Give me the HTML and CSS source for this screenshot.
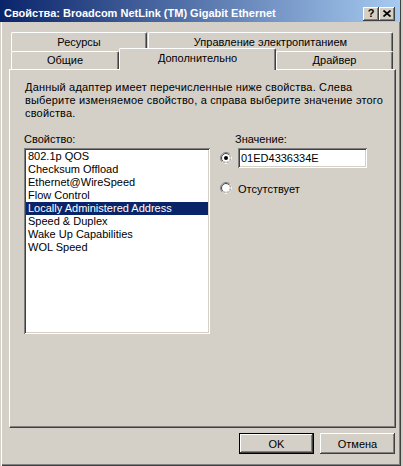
FILE: index.html
```html
<!DOCTYPE html>
<html lang="ru">
<head>
  <meta charset="UTF-8">
  <title>Свойства: Broadcom NetLink (TM) Gigabit Ethernet</title>
  <link rel="stylesheet" href="styles.css">
</head>
<body>
  <div class="window">
    <!-- Title bar -->
    <div class="titlebar">
      <span class="title">Свойства: Broadcom NetLink (TM) Gigabit Ethernet</span>
      <div class="caption-buttons">
        <button class="cap-btn">?</button>
        <button class="cap-btn">
          <svg width="8" height="7" viewBox="0 0 8 7"><path d="M0.5 0.5L7.5 6.5M7.5 0.5L0.5 6.5" stroke="#000" stroke-width="1.7" fill="none"/></svg>
        </button>
      </div>
    </div>

    <!-- Tabs -->
    <div class="tabs">
      <div class="tab-row back">
        <div class="tab tab-res">Ресурсы</div>
        <div class="tab tab-power">Управление электропитанием</div>
      </div>
      <div class="tab-row front">
        <div class="tab tab-general">Общие</div>
        <div class="tab tab-advanced active">Дополнительно</div>
        <div class="tab tab-driver">Драйвер</div>
      </div>
    </div>

    <!-- Tab page -->
    <div class="panel">
      <p class="intro">Данный адаптер имеет перечисленные ниже свойства. Слева<br>выберите изменяемое свойство, а справа выберите значение этого<br>свойства.</p>

      <div class="props">
        <div class="prop-col">
          <div class="label">Свойство:</div>
          <ul class="listbox">
            <li>802.1p QOS</li>
            <li>Checksum Offload</li>
            <li>Ethernet@WireSpeed</li>
            <li>Flow Control</li>
            <li class="selected">Locally Administered Address</li>
            <li>Speed &amp; Duplex</li>
            <li>Wake Up Capabilities</li>
            <li>WOL Speed</li>
          </ul>
        </div>

        <div class="value-col">
          <div class="label value-label">Значение:</div>
          <div class="option">
            <svg class="radio" width="12" height="12" viewBox="0 0 12 12">
              <circle cx="6" cy="6" r="5.5" fill="#fff" stroke="#808080"/>
              <path d="M9.89 2.11A5.5 5.5 0 0 1 2.11 9.89" stroke="#fff" fill="none"/>
              <circle cx="6" cy="6" r="4.5" fill="#fff" stroke="#404040"/>
              <path d="M9.18 2.82A4.5 4.5 0 0 1 2.82 9.18" stroke="#d4d0c8" fill="none"/>
              <circle cx="6" cy="6" r="2" fill="#000"/>
            </svg>
            <div class="field">01ED4336334E</div>
          </div>
          <div class="option second">
            <svg class="radio" width="12" height="12" viewBox="0 0 12 12">
              <circle cx="6" cy="6" r="5.5" fill="#fff" stroke="#808080"/>
              <path d="M9.89 2.11A5.5 5.5 0 0 1 2.11 9.89" stroke="#fff" fill="none"/>
              <circle cx="6" cy="6" r="4.5" fill="#fff" stroke="#404040"/>
              <path d="M9.18 2.82A4.5 4.5 0 0 1 2.82 9.18" stroke="#d4d0c8" fill="none"/>
            </svg>
            <span class="option-text">Отсутствует</span>
          </div>
        </div>
      </div>
    </div>

    <!-- Dialog buttons -->
    <div class="buttons">
      <button class="btn default">OK</button>
      <button class="btn">Отмена</button>
    </div>
  </div>
</body>
</html>
```

FILE: styles.css
```css
body {
  margin: 0;
  background: #d4d0c8;
}
.window {
  width: 401px;
  height: 466px;
  box-sizing: border-box;
  background: #d4d0c8;
  box-shadow: inset 1px 0 #d4d0c8, inset 2px 0 #fff, inset -1px -1px #404040, inset -2px -2px #808080;
  font-family: "Liberation Sans", Arial, sans-serif;
  font-size: 11px;
  color: #000;
  overflow: hidden;
}
.titlebar {
  height: 22px;
  margin-right: 1px;
  display: flex;
  align-items: center;
  padding: 0 5px 0 4px;
  background: linear-gradient(to right, #0a246a, #a6caf0);
}
.title {
  flex: 1;
  color: #fff;
  font-weight: bold;
  padding-top: 3px;
  white-space: nowrap;
}
.caption-buttons {
  display: flex;
  margin-top: 5px;
}
.cap-btn {
  width: 16px;
  height: 14px;
  padding: 0;
  border: none;
  background: #d4d0c8;
  box-shadow: inset -1px -1px #404040, inset 1px 1px #fff, inset -2px -2px #808080;
  font-family: "Liberation Sans", Arial, sans-serif;
  font-size: 11px;
  font-weight: bold;
  line-height: 13px;
  display: flex;
  align-items: center;
  justify-content: center;
}

/* tabs */
.tabs {
  margin: 10px 0 0 11px;
}
.tab-row {
  display: flex;
  align-items: flex-end;
}
.tab-row.back {
  height: 19px;
}
.tab-row.front {
  height: 18px;
}
.tab {
  box-sizing: border-box;
  height: 100%;
  border-top: 1px solid #fff;
  border-left: 1px solid #fff;
  border-right: 1px solid #404040;
  box-shadow: inset -1px 0 #808080;
  border-radius: 2px 2px 0 0;
  text-align: center;
  white-space: nowrap;
  background: #d4d0c8;
}
.back .tab {
  line-height: 18px;
}
.front .tab {
  line-height: 17px;
}
.tab-res {
  width: 136px;
}
.tab-power {
  width: 245px;
  margin-left: 1px;
}
.tab-general {
  width: 108px;
}
.tab-advanced {
  width: 157px;
}
.tab-driver {
  width: 117px;
}
.tab.active {
  height: 22px;
  margin-top: -3px;
  margin-bottom: -1px;
  padding-top: 1px;
  position: relative;
  z-index: 1;
}

/* tab page */
.panel {
  margin-left: 9px;
  width: 387px;
  height: 359px;
  box-sizing: border-box;
  border-top: 1px solid #fff;
  border-left: 1px solid #fff;
  border-right: 1px solid #404040;
  border-bottom: 1px solid #404040;
  box-shadow: inset -1px -1px #808080;
  padding: 11px 0 0 15px;
}
.intro {
  margin: 0;
  line-height: 13px;
  letter-spacing: 0.18px;
  white-space: nowrap;
}
.props {
  display: flex;
  margin-top: 13px;
}
.label {
  line-height: 13px;
  height: 13px;
  margin-bottom: 2px;
}
.prop-col {
  margin-left: -1px;
}
.listbox {
  list-style: none;
  margin: 0;
  padding: 2px;
  width: 186px;
  height: 186px;
  box-sizing: border-box;
  background: #fff;
  box-shadow: inset 1px 1px #808080, inset -1px -1px #fff, inset 2px 2px #404040, inset -2px -2px #d4d0c8;
}
.listbox li {
  line-height: 13px;
  padding-left: 2px;
  white-space: nowrap;
}
.listbox li.selected {
  background: #0a246a;
  color: #fff;
}
.value-col {
  margin-left: 10px;
}
.value-label {
  padding-left: 15px;
}
.option {
  display: flex;
  align-items: center;
  gap: 6px;
}
.option.second {
  margin-top: 14px;
  height: 12px;
}
.option-text {
  line-height: 13px;
  padding-top: 2px;
}
.field {
  width: 129px;
  height: 20px;
  box-sizing: border-box;
  padding-left: 3px;
  line-height: 16px;
  background: #fff;
  box-shadow: inset 1px 1px #808080, inset -1px -1px #fff, inset 2px 2px #404040, inset -2px -2px #d4d0c8;
  border: none;
  padding-top: 2px;
}

/* dialog buttons */
.buttons {
  display: flex;
  gap: 6px;
  margin: 5px 0 0 239px;
}
.btn {
  width: 75px;
  height: 21px;
  box-sizing: border-box;
  padding: 0;
  border: none;
  background: #d4d0c8;
  box-shadow: inset -1px -1px #404040, inset 1px 1px #fff, inset -2px -2px #808080;
  font-family: "Liberation Sans", Arial, sans-serif;
  font-size: 11px;
  color: #000;
}
.btn.default {
  border: 1px solid #000;
}
```
